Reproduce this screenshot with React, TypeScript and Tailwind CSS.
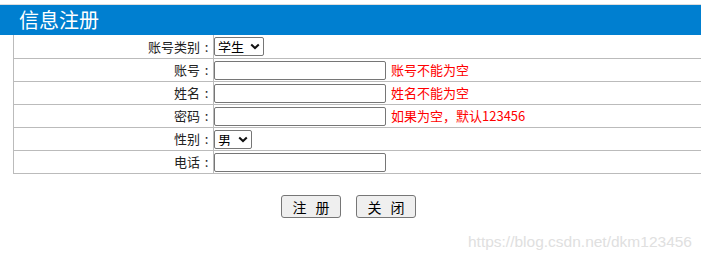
const font = { fontFamily: '"Noto Sans CJK SC", "Liberation Sans", sans-serif' };

type Row = { label: string; kind: "input" | "select"; options?: string[]; width?: string; hint?: string };

const rows: Row[] = [
  { label: "账号类别", kind: "select", options: ["学生", "教师"], width: "w-[50px]" },
  { label: "账号", kind: "input", hint: "账号不能为空" },
  { label: "姓名", kind: "input", hint: "姓名不能为空" },
  { label: "密码", kind: "input", hint: "如果为空，默认123456" },
  { label: "性别", kind: "select", options: ["男", "女"], width: "w-[38px]" },
  { label: "电话", kind: "input" },
];

const Chevron = () => (
  <svg width="10" height="7" viewBox="0 0 10 7" className="absolute right-[4px] top-[6px] pointer-events-none">
    <path d="M1.2 1.4 L5 5 L8.8 1.4" fill="none" stroke="#111" strokeWidth="2" />
  </svg>
);

const App = () => {
  return (
    <div className="w-[701px] h-[259px] bg-white pt-[4px] text-[13px] text-black" style={font}>
      <div className="border-t border-[#dddddd] h-[31px] bg-[#007fd0] pl-[19px] flex items-center">
        <h1 className="text-white text-[20px] leading-none">信息注册</h1>
      </div>

      <div className="ml-[13px] border-l border-[#bbbbbb]">
        {rows.map((r, i) => (
          <div
            key={r.label}
            className={`grid grid-cols-[200px_1fr] border-b border-[#bbbbbb] ${i === 0 ? "h-[24px]" : "h-[23px]"}`}
          >
            <div className="border-r border-[#bbbbbb] flex items-center justify-end text-[#222]">
              <span>{r.label}</span>
              <span className="w-[13px] text-center">:</span>
            </div>
            <div className="flex items-center">
              {r.kind === "select" ? (
                <div className={`relative ${r.width} h-[19px]`}>
                  <select
                    className="appearance-none w-full h-full border border-[#767676] rounded-[2px] bg-white pl-[3px] text-[13px] leading-none outline-none"
                    defaultValue={r.options![0]}
                  >
                    {r.options!.map((o) => (
                      <option key={o}>{o}</option>
                    ))}
                  </select>
                  <Chevron />
                </div>
              ) : (
                <input
                  type="text"
                  className="w-[172px] h-[19px] border border-[#767676] rounded-[2px] bg-white outline-none"
                />
              )}
              {r.hint && <span className="ml-[5px] text-[#ff0000]">{r.hint}</span>}
            </div>
          </div>
        ))}
      </div>

      <div className="flex justify-center gap-[15px] mt-[21px] pr-[4px]">
        <button className="w-[60px] h-[23px] border border-[#767676] rounded-[3px] bg-[#efefef] text-[14px] leading-none tracking-[3px] pl-[3px]">
          注 册
        </button>
        <button className="w-[60px] h-[23px] border border-[#767676] rounded-[3px] bg-[#efefef] text-[14px] leading-none tracking-[3px] pl-[3px]">
          关 闭
        </button>
      </div>

      <div className="flex justify-end pr-[9px] mt-[12px]">
        <span className="text-[15.5px] text-[#e0e0e0]" style={{ fontFamily: '"Liberation Sans", Arial, sans-serif' }}>
          https://blog.csdn.net/dkm123456
        </span>
      </div>
    </div>
  );
};

export default App;
